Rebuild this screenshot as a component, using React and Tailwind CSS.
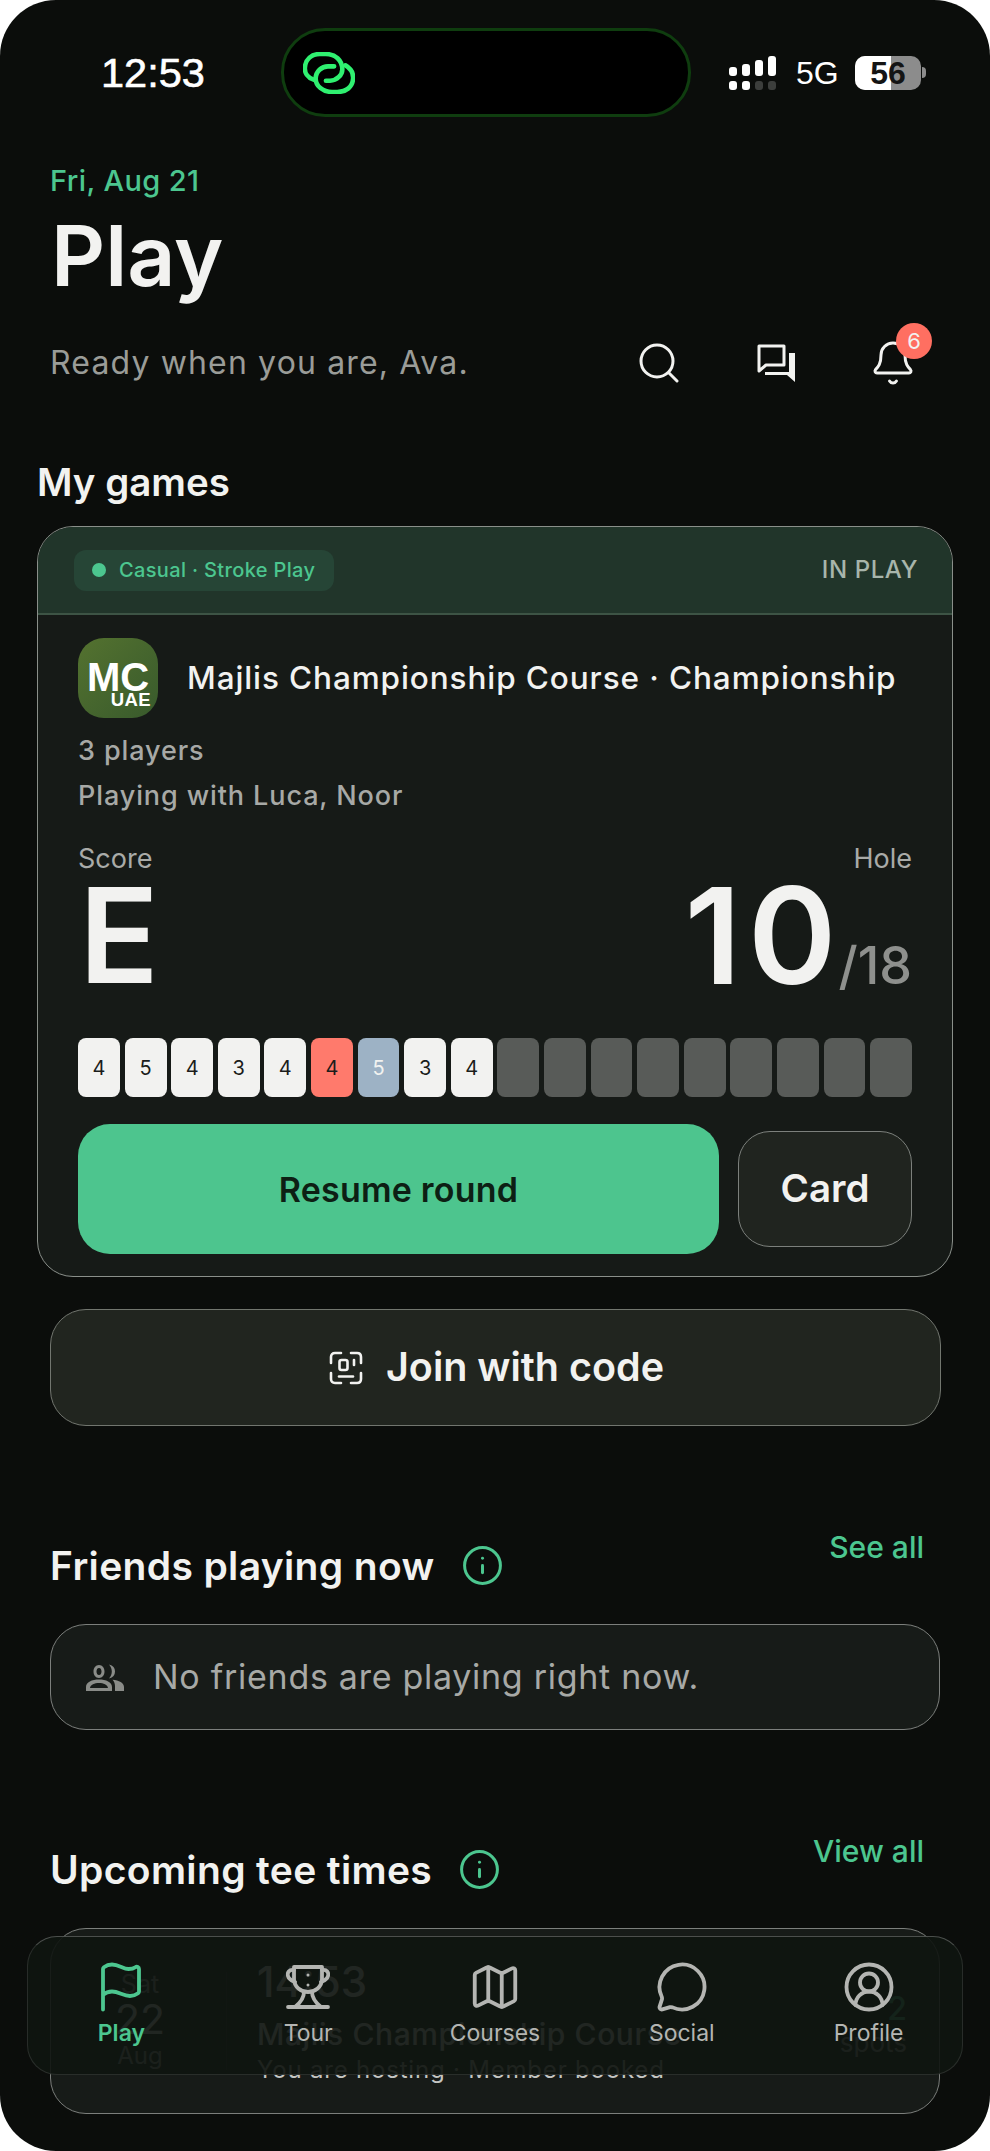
import { Bell, CircleUserRound, Flag, Info, Map, MessageCircle } from "lucide-react";

const scores = [
  { v: 4 }, { v: 5 }, { v: 4 }, { v: 3 }, { v: 4 },
  { v: 4, bg: "bg-[#ff7a6c]" },
  { v: 5, bg: "bg-[#9db2c5]", text: "text-[#f2f2f0]" },
  { v: 3 }, { v: 4 },
  {}, {}, {}, {}, {}, {}, {}, {}, {},
];

function LinkLogo() {
  return (
    <svg width="52" height="42" viewBox="0 0 50 41" fill="none" stroke="#2ff070" strokeWidth="4.5" strokeLinecap="round" className="shrink-0">
      <path d="M10 27C4 25 1 20 1.5 15C2 7 8 2 16 2H22C31 2 38 8 38 17C38 22 33 28 26 28H22" />
      <path d="M41 13C46 16 49 20 48.5 26C48 34 42 39 33 39H28C19 39 12 33 12 26C12 19 18 14 24 14H30" />
    </svg>
  );
}

function Signal() {
  const tops = ["h-[9px]", "h-[12px]", "h-[16px]", "h-[20px]"];
  return (
    <div className="flex gap-[5px] w-[49px]">
      {tops.map((h, i) => (
        <div key={h} className="flex flex-col justify-end gap-[5px] w-[8px] h-[34px]">
          <div className={`${h} rounded-[3px] bg-white`} />
          <div className={`h-[9px] rounded-[3px] ${i < 2 ? "bg-white" : "bg-[#3c3e3c]"}`} />
        </div>
      ))}
    </div>
  );
}

function Battery() {
  return (
    <div className="flex items-center gap-[1px]">
      <div className="relative w-[66px] h-[34px] rounded-[10px] overflow-hidden bg-[#8c8c8c] flex items-center justify-center">
        <div className="absolute left-0 top-0 bottom-0 w-[36px] bg-white" />
        <span className="relative font-['Liberation_Sans',sans-serif] font-bold text-[32px] leading-none text-[#141414]">56</span>
      </div>
      <div className="w-[4px] h-[11px] rounded-r-full bg-[#8c8c8c]" />
    </div>
  );
}

function StatusBar() {
  return (
    <div className="flex items-center pt-[28px] pl-[101px]">
      <div className="w-[180px] font-['Liberation_Sans',sans-serif] text-[41.500px] leading-none font-normal text-white [-webkit-text-stroke:0.6px_white]">12:53</div>
      <div className="w-[410px] h-[89px] rounded-[44px] bg-black border-[3px] border-[#0f3d0f] flex items-center pl-[19px]">
        <LinkLogo />
      </div>
      <div className="ml-[38px] flex items-center">
        <Signal />
        <div className="ml-[18px] w-[59px] font-['Liberation_Sans',sans-serif] text-[32px] leading-none text-white">5G</div>
        <Battery />
      </div>
    </div>
  );
}

function SearchIcon() {
  return (
    <svg width="40" height="40" viewBox="0 0 40 40" fill="none" stroke="#f2f2f0" strokeWidth="3" strokeLinecap="round">
      <circle cx="18" cy="18" r="16" />
      <path d="M30 30L38 38" />
    </svg>
  );
}

function ChatIcon() {
  return (
    <svg width="38" height="38" viewBox="0 0 38 38" fill="none">
      <path d="M2 2H27V21H9L2 27Z" stroke="#f2f2f0" strokeWidth="3" strokeLinejoin="round" />
      <path d="M32 9H38V38L30 31H8V28H32Z" fill="#f2f2f0" />
    </svg>
  );
}

function ScanIcon() {
  return (
    <svg width="34" height="34" viewBox="0 0 34 34" fill="none" stroke="#f2f2f0" strokeWidth="2.6" strokeLinecap="round">
      <path d="M2 12V6C2 3.5 3.5 2 6 2H12" />
      <path d="M22 2H28C30.5 2 32 3.5 32 6V12" />
      <path d="M32 22V28C32 30.500 30.500 32 28 32H22" />
      <path d="M12 32H6C3.500 32 2 30.500 2 28V22" />
      <rect x="10.500" y="9" width="8" height="10" rx="2" />
      <path d="M25 9V14" />
      <path d="M10 25.500H24" />
    </svg>
  );
}

function PeopleIcon() {
  return (
    <svg width="38" height="27" viewBox="0 0 38 27" fill="#8a8c88">
      <path fillRule="evenodd" d="M13 1C16.500 1 18.500 4 18.500 7.500C18.500 11 16.500 14 13 14C9.500 14 7.500 11 7.500 7.500C7.500 4 9.500 1 13 1ZM13 4C11.300 4 10.500 5.700 10.500 7.500C10.500 9.300 11.300 11 13 11C14.700 11 15.500 9.300 15.500 7.500C15.500 5.700 14.700 4 13 4Z" />
      <path fillRule="evenodd" d="M0 27V23C0 18 6 15.500 13 15.500C20 15.500 26 18 26 23V27ZM4 24H22C21.500 20.500 17.500 19 13 19C8.500 19 4.500 20.500 4 24Z" />
      <path d="M23 0.500C27 1.500 29 4 29 7.500C29 11 27 13.500 23 14.500C25 12 25.800 10 25.800 7.500C25.800 5 25 3 23 0.500Z" />
      <path d="M29 27V22C29 19.500 28 17.500 26.500 15.800C33 16.500 38 19 38 23V27Z" />
    </svg>
  );
}

function TrophyIcon() {
  return (
    <svg width="44" height="44" viewBox="0 0 44 44" fill="none" stroke="currentColor" strokeWidth="3.800" strokeLinecap="round" strokeLinejoin="round">
      <path d="M8 2H36V14C36 22 29 27 22 27C15 27 8 22 8 14Z" />
      <path d="M8 5C3 4 1 8 2 11C3 15 7 16 9 17" />
      <path d="M36 5C41 4 43 8 42 11C41 15 37 16 35 17" />
      <path d="M18 27C18 33 14 38 9 42" />
      <path d="M26 27C26 33 30 38 35 42" />
      <path d="M2 42H42" />
      <circle cx="22" cy="10" r="1.500" fill="currentColor" stroke="none" />
      <circle cx="22" cy="20" r="1.500" fill="currentColor" stroke="none" />
    </svg>
  );
}

function SectionHeader({ title, action }) {
  return (
    <div className="flex justify-between pl-[50px] pr-[66px]">
      <div className="flex items-center h-[44px] mt-[14px]">
        <h2 className="font-semibold text-[39px] leading-none tracking-[0.35px] text-[#f2f2f0]">{title}</h2>
        <Info size={43} strokeWidth={1.67} className="ml-[26px] text-[#4cc68f]" />
      </div>
      <span className="font-medium text-[30px] leading-[36px] text-[#4cc68f]">{action}</span>
    </div>
  );
}

function GameCard() {
  return (
    <div className="mt-[22px] mx-[37px] rounded-[36px] border-[1.5px] border-[#8a8f8a] bg-[#161a17] overflow-hidden">
      <div className="h-[88px] bg-[#21352a] border-b-2 border-[#3d5445] flex items-center justify-between pl-[36px] pr-[34px]">
        <div className="h-[41px] w-[260px] rounded-[12px] bg-[#264536] flex items-center pl-[18px] gap-[13px]">
          <span className="w-[14px] h-[14px] rounded-full bg-[#4cc68f]" />
          <span className="font-medium text-[20px] leading-none tracking-[0.35px] text-[#4cc68f]">Casual · Stroke Play</span>
        </div>
        <span className="font-medium text-[24px] leading-none tracking-[0.6px] text-[#a8b5ab]">IN PLAY</span>
      </div>
      <div className="px-[40px]">
        <div className="flex items-center mt-[23px]">
          <div className="relative w-[80px] h-[80px] rounded-[26px] bg-gradient-to-br from-[#54722f] to-[#385a2c] text-white font-['Liberation_Sans',sans-serif] font-bold shrink-0">
            <span className="absolute left-[9px] top-[21px] text-[40px] leading-[36px]">MC</span>
            <span className="absolute right-[7px] top-[53px] text-[18.500px] leading-[18px] tracking-[0.4px]">UAE</span>
          </div>
          <div className="ml-[29px] font-medium text-[31.500px] leading-[40px] tracking-[0.9px] text-[#f2f2f0] whitespace-nowrap">Majlis Championship Course · Championship</div>
        </div>
        <div className="mt-[15px] font-medium text-[27px] leading-[36px] tracking-[0.9px] text-[#a7a9a6]">3 players</div>
        <div className="mt-[9px] font-medium text-[27px] leading-[36px] tracking-[0.9px] text-[#a7a9a6]">Playing with Luca, Noor</div>
        <div className="mt-[28px] flex justify-between">
          <div>
            <div className="text-[27px] leading-[34px] text-[#a9aba8]">Score</div>
            <div className="mt-[-6px] ml-[1px] font-semibold text-[132px] leading-[130px] text-[#f2f2f0]">E</div>
          </div>
          <div className="flex flex-col items-end">
            <div className="text-[27px] leading-[34px] text-[#a9aba8]">Hole</div>
            <div className="mt-[-6px] flex items-baseline leading-[130px] text-[#f2f2f0]">
              <span className="font-semibold text-[134px] leading-[130px] tracking-[7px]">10</span>
              <span className="ml-[-5px] font-medium text-[52px] leading-none text-[#8e908d]">/18</span>
            </div>
          </div>
        </div>
        <div className="mt-[38px] flex gap-[4.700px]">
          {scores.map((s, i) => (
            <div key={i} className={`flex-1 h-[59px] rounded-[8px] flex items-center justify-center text-[20px] font-normal ${s.v ? s.bg || "bg-[#f2f2f0]" : "bg-[#585b58]"} ${s.text || "text-[#1b1d1b]"}`}>
              {s.v}
            </div>
          ))}
        </div>
        <div className="mt-[27px] mb-[22px] flex items-center gap-[19px]">
          <button className="w-[641px] h-[130px] rounded-[32px] bg-[#4dc58e] font-semibold text-[34px] tracking-[0.2px] text-[#0d1f14]">Resume round</button>
          <button className="flex-1 h-[116px] rounded-[32px] bg-[#20241f] border-[1.5px] border-[#7c807c] font-semibold text-[38.500px] text-[#f2f2f0]">Card</button>
        </div>
      </div>
    </div>
  );
}

function NavItem({ icon, label, active }) {
  return (
    <div className={`flex-1 flex flex-col items-center ${active ? "text-[#4cc68f]" : "text-[#b4b5b2]"}`}>
      <div className="h-[54px] flex items-center justify-center">{icon}</div>
      <span className={`mt-[5px] text-[23px] leading-[28px] ${active ? "font-semibold" : "font-normal"}`}>{label}</span>
    </div>
  );
}

function BottomNav() {
  return (
    <div className="absolute left-[27px] top-[1936px] w-[936px] h-[139px] pt-[23px] rounded-[30px] border border-[#ffffff1c] border-t-[#ffffff40] bg-[#0f1510]/92 flex">
      <NavItem active label="Play" icon={<Flag size={54} strokeWidth={1.7} />} />
      <NavItem label="Tour" icon={<TrophyIcon />} />
      <NavItem label="Courses" icon={<Map size={54} strokeWidth={1.7} />} />
      <NavItem label="Social" icon={<MessageCircle size={54} strokeWidth={1.7} />} />
      <NavItem label="Profile" icon={<CircleUserRound size={54} strokeWidth={1.7} />} />
    </div>
  );
}

export default function App() {
  return (
    <div className="relative w-[990px] h-[2151px] overflow-hidden bg-white font-['Inter',sans-serif]">
      <div className="h-full rounded-[56px] bg-[#0b0d0b] overflow-hidden">
        <StatusBar />

        <div className="mt-[46px] pl-[50px] font-medium text-[29px] leading-[36px] tracking-[0.4px] text-[#4cc68f]">Fri, Aug 21</div>
        <h1 className="mt-[15px] pl-[51px] font-semibold text-[84px] leading-[84px] text-[#f2f2f0]">Play</h1>
        <div className="mt-[44px] pl-[50px] pr-[79px] h-[42px] flex items-center justify-between">
          <span className="text-[32px] leading-none tracking-[1.15px] text-[#9a9c98]">Ready when you are, Ava.</span>
          <div className="relative flex items-center">
            <SearchIcon />
            <div className="ml-[78px]"><ChatIcon /></div>
            <div className="ml-[74px] -mr-[6px] text-[#f2f2f0]"><Bell size={48} strokeWidth={1.5} /></div>
            <span className="absolute right-[-21px] top-[-16px] w-[36px] h-[36px] rounded-full bg-[#ff6f61] flex items-center justify-center text-[22px] leading-none text-[#f2f2f0]">6</span>
          </div>
        </div>

        <h2 className="mt-[76px] pl-[37px] font-semibold text-[38.500px] leading-[44px] text-[#f2f2f0]">My games</h2>
        <GameCard />

        <button className="mt-[32px] ml-[50px] w-[891px] h-[117px] rounded-[36px] bg-[#21251f] border-[1.5px] border-[#72766f] flex items-center justify-center gap-[23px] pl-[2px] font-semibold text-[39.500px] text-[#f2f2f0]">
          <ScanIcon />
          Join with code
        </button>

        <div className="mt-[103px]">
          <SectionHeader title="Friends playing now" action="See all" />
        </div>
        <div className="mt-[37px] ml-[50px] w-[890px] h-[106px] rounded-[36px] bg-[#171b18] border-[1.5px] border-[#7c7f7c] flex items-center pl-[35px] gap-[29px]">
          <PeopleIcon />
          <span className="text-[34px] leading-none tracking-[0.72px] text-[#a7a9a6]">No friends are playing right now.</span>
        </div>

        <div className="mt-[103px]">
          <SectionHeader title="Upcoming tee times" action="View all" />
        </div>
        <div className="mt-[37px] ml-[50px] w-[890px] h-[186px] rounded-[36px] bg-[#171b18] border-[1.5px] border-[#7c7f7c] flex items-center">
          <div className="w-[176px] flex flex-col items-center border-r border-[#2c302c] pl-[3px]">
            <span className="text-[25px] leading-[24px] text-[#a7a9a6]">Sat</span>
            <span className="text-[41px] leading-[46px] text-[#f2f2f0]">22</span>
            <span className="text-[24px] leading-[28px] text-[#a7a9a6]">Aug</span>
          </div>
          <div className="flex-1 pl-[30px]">
            <div className="font-medium text-[42px] leading-[52px] text-[#f2f2f0]">14:53</div>
            <div className="font-medium text-[30px] leading-[40px] tracking-[0.6px] text-[#f2f2f0] whitespace-nowrap mt-[6px]">Majlis Championship Course</div>
            <div className="text-[24px] leading-[32px] tracking-[0.8px] text-[#c4c5c2] whitespace-nowrap">You are hosting · Member booked</div>
          </div>
          <div className="w-[100px] pr-[32px] pt-[8px] flex flex-col items-end">
            <span className="font-medium text-[32px] leading-[36px] text-[#4cc68f]">2</span>
            <span className="text-[26px] leading-[32px] text-[#a7a9a6]">spots</span>
          </div>
        </div>
      </div>
      <BottomNav />
    </div>
  );
}
